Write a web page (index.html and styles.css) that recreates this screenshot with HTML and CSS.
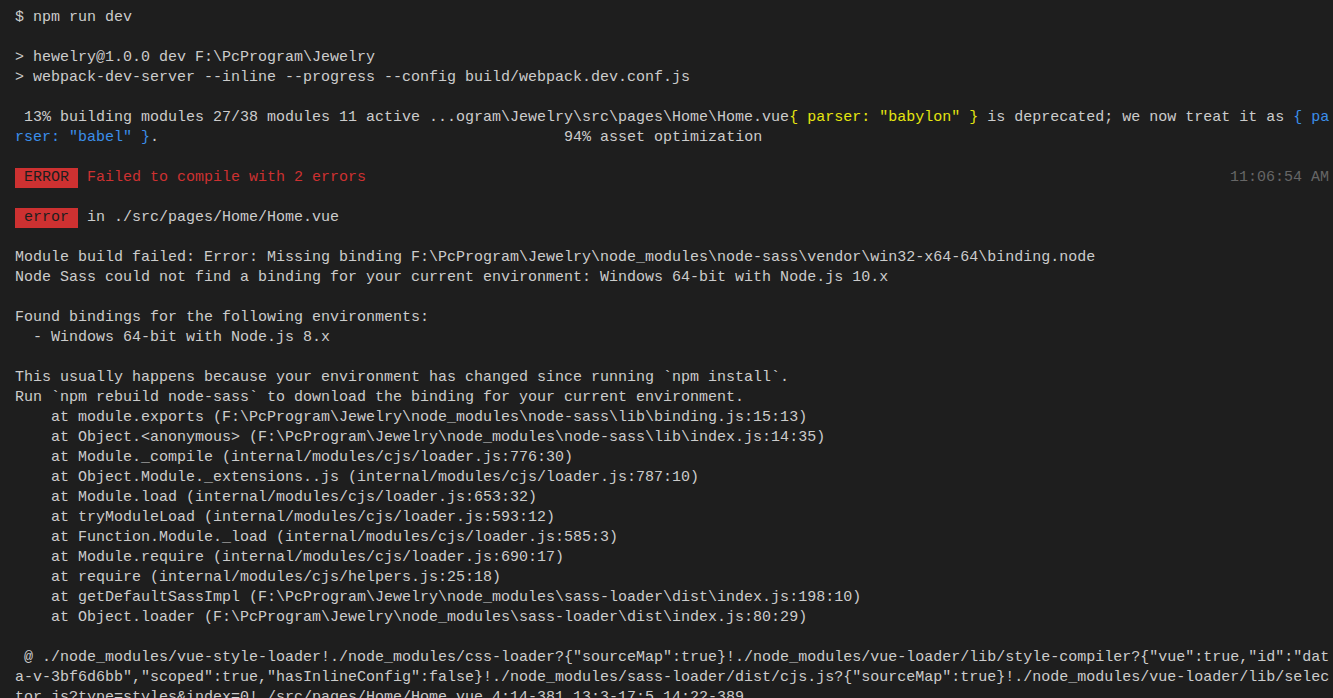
FILE: index.html
```html
<!DOCTYPE html>
<html lang="en">

<head>
    <meta charset="UTF-8">
    <title>Terminal</title>
    <link rel="stylesheet" href="styles.css">
</head>

<body>

    <div class="terminal">
        <div class="line">$ npm run dev</div>
        <div class="line"></div>
        <div class="line">&gt; hewelry@1.0.0 dev F:\PcProgram\Jewelry</div>
        <div class="line">&gt; webpack-dev-server --inline --progress --config build/webpack.dev.conf.js</div>
        <div class="line"></div>
        <div class="line"> 13% building modules 27/38 modules 11 active ...ogram\Jewelry\src\pages\Home\Home.vue<span class="yellow">{ parser: "babylon" }</span> is deprecated; we now treat it as <span class="blue">{ pa</span></div>
        <div class="line"><span class="blue">rser: "babel" }</span>.                                             94% asset optimization</div>
        <div class="line"></div>
        <div class="line row"><span><span class="badge"> ERROR </span> <span class="red">Failed to compile with 2 errors</span></span><span class="time">11:06:54 AM</span></div>
        <div class="line"></div>
        <div class="line"><span class="badge"> error </span> in ./src/pages/Home/Home.vue</div>
        <div class="line"></div>
        <div class="line">Module build failed: Error: Missing binding F:\PcProgram\Jewelry\node_modules\node-sass\vendor\win32-x64-64\binding.node</div>
        <div class="line">Node Sass could not find a binding for your current environment: Windows 64-bit with Node.js 10.x</div>
        <div class="line"></div>
        <div class="line">Found bindings for the following environments:</div>
        <div class="line">  - Windows 64-bit with Node.js 8.x</div>
        <div class="line"></div>
        <div class="line">This usually happens because your environment has changed since running `npm install`.</div>
        <div class="line">Run `npm rebuild node-sass` to download the binding for your current environment.</div>
        <div class="line">    at module.exports (F:\PcProgram\Jewelry\node_modules\node-sass\lib\binding.js:15:13)</div>
        <div class="line">    at Object.&lt;anonymous&gt; (F:\PcProgram\Jewelry\node_modules\node-sass\lib\index.js:14:35)</div>
        <div class="line">    at Module._compile (internal/modules/cjs/loader.js:776:30)</div>
        <div class="line">    at Object.Module._extensions..js (internal/modules/cjs/loader.js:787:10)</div>
        <div class="line">    at Module.load (internal/modules/cjs/loader.js:653:32)</div>
        <div class="line">    at tryModuleLoad (internal/modules/cjs/loader.js:593:12)</div>
        <div class="line">    at Function.Module._load (internal/modules/cjs/loader.js:585:3)</div>
        <div class="line">    at Module.require (internal/modules/cjs/loader.js:690:17)</div>
        <div class="line">    at require (internal/modules/cjs/helpers.js:25:18)</div>
        <div class="line">    at getDefaultSassImpl (F:\PcProgram\Jewelry\node_modules\sass-loader\dist\index.js:198:10)</div>
        <div class="line">    at Object.loader (F:\PcProgram\Jewelry\node_modules\sass-loader\dist\index.js:80:29)</div>
        <div class="line"></div>
        <div class="line"> @ ./node_modules/vue-style-loader!./node_modules/css-loader?{"sourceMap":true}!./node_modules/vue-loader/lib/style-compiler?{"vue":true,"id":"dat</div>
        <div class="line">a-v-3bf6d6bb","scoped":true,"hasInlineConfig":false}!./node_modules/sass-loader/dist/cjs.js?{"sourceMap":true}!./node_modules/vue-loader/lib/selec</div>
        <div class="line">tor.js?type=styles&amp;index=0!./src/pages/Home/Home.vue 4:14-381 13:3-17:5 14:22-389</div>
    </div>

</body>

</html>
```

FILE: styles.css
```css
html,
body {
    margin: 0;
    height: 100%;
    background-color: #1e1e1e;
    overflow: hidden;
}

.terminal {
    font-family: "Liberation Mono", "DejaVu Sans Mono", monospace;
    font-size: 15px;
    line-height: 20px;
    color: #cccccc;
    padding: 8px 0 0 15px;
    width: 1314px;
}

.line {
    height: 20px;
    white-space: pre;
}

.row {
    display: flex;
    justify-content: space-between;
}

.badge {
    background-color: #cd3131;
    color: #1e1e1e;
    display: inline-block;
    height: 20px;
    line-height: 20px;
}

.red {
    color: #cd3131;
}

.yellow {
    color: #e5e510;
}

.blue {
    color: #3b8eea;
}

.time {
    color: #666666;
}
```
